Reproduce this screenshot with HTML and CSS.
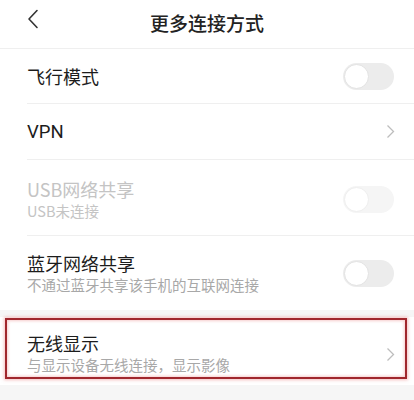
FILE: index.html
```html
<!DOCTYPE html>
<html lang="zh">
<head>
<meta charset="utf-8">
<link rel="stylesheet" href="styles.css">
</head>
<body>
<div class="page">
  <header class="header">
    <svg class="back" width="12" height="20" viewBox="0 0 12 20"><path d="M10 1.5 L2 10 L10 18.5" fill="none" stroke="#333" stroke-width="1.6" stroke-linecap="round" stroke-linejoin="round"/></svg>
    <h1 class="title">更多连接方式</h1>
  </header>
  <section class="group">
    <div class="row r1">
      <div class="text"><div class="label">飞行模式</div></div>
      <div class="switch"><div class="knob"></div></div>
    </div>
    <div class="row r2">
      <div class="text"><div class="label latin">VPN</div></div>
      <svg class="chev" width="9" height="15" viewBox="0 0 9 15"><path d="M1.5 1.5 L7.5 7.5 L1.5 13.5" fill="none" stroke="#bdbdbd" stroke-width="1.3"/></svg>
    </div>
    <div class="row r3 disabled">
      <div class="text"><div class="label">USB网络共享</div><div class="sub">USB未连接</div></div>
      <div class="switch off"><div class="knob"></div></div>
    </div>
    <div class="row r4 last">
      <div class="text"><div class="label">蓝牙网络共享</div><div class="sub">不通过蓝牙共享该手机的互联网连接</div></div>
      <div class="switch"><div class="knob"></div></div>
    </div>
  </section>
  <div class="gap"></div>
  <section class="group highlight">
    <div class="row r5 last">
      <div class="text"><div class="label">无线显示</div><div class="sub">与显示设备无线连接，显示影像</div></div>
      <svg class="chev" width="9" height="15" viewBox="0 0 9 15"><path d="M1.5 1.5 L7.5 7.5 L1.5 13.5" fill="none" stroke="#bdbdbd" stroke-width="1.3"/></svg>
    </div>
    <div class="mark"></div>
  </section>
  <div class="gap tail"></div>
</div>
</body>
</html>
```
FILE: styles.css
```css
* { box-sizing: border-box; }
html, body { margin: 0; padding: 0; }
body {
  background: #ffffff;
  font-family: "Noto Sans CJK SC", "Noto Sans", sans-serif;
  color: #1c1c1c;
  width: 414px;
  height: 400px;
  overflow: hidden;
}
.header {
  height: 49px;
  display: flex;
  align-items: center;
  justify-content: center;
  border-bottom: 1px solid #efefef;
  position: relative;
}
.back {
  position: absolute;
  left: 27px;
  top: 9px;
}
.title {
  margin: 0;
  margin-top: -4px;
  font-size: 19px;
  font-weight: 500;
  color: #222;
  letter-spacing: 0;
}
.group { background: #fff; position: relative; }
.row {
  margin-left: 27px;
  padding-right: 20px;
  border-bottom: 1px solid #efefef;
  display: flex;
  align-items: center;
  justify-content: space-between;
}
.row.last { border-bottom: none; }
.r1 { height: 55px; }
.r2 { height: 56px; }
.r3 { height: 76px; padding-top: 3px; }
.r4 { height: 74px; }
.label {
  font-size: 18px;
  line-height: 22px;
  color: #1c1c1c;
}
.label.latin { font-family: "Roboto", "Noto Sans", sans-serif; font-size: 18.5px; }
.sub {
  font-size: 14.5px;
  line-height: 20px;
  color: #a8a8a8;
  margin-top: 1px;
}
.disabled .label, .disabled .sub { color: #c4c4c4; }
.switch {
  width: 51px;
  height: 27px;
  border-radius: 14px;
  background: #ececec;
  position: relative;
  flex: none;
}
.knob {
  position: absolute;
  left: 1px;
  top: 1px;
  width: 25px;
  height: 25px;
  border-radius: 50%;
  background: #fff;
  border: 1px solid #e2e2e2;
}
.switch.off { background: #f5f5f5; }
.switch.off .knob { border-color: #eeeeee; }
.chev { flex: none; margin-right: -1px; }
.gap { height: 7px; background: #f6f6f6; }
.gap.tail { height: 30px; }
.highlight .r5 { height: 68px; padding-top: 5px; }
.highlight .r5 .chev { margin-top: 2px; }
.mark {
  position: absolute;
  left: 5px;
  right: 7px;
  top: 1px;
  bottom: 6px;
  border: 2.5px solid #a0272d;
  box-shadow: 0 0 3px 1px rgba(235, 130, 130, 0.5), inset 0 0 3px 1px rgba(235, 130, 130, 0.4);
  pointer-events: none;
}
```
